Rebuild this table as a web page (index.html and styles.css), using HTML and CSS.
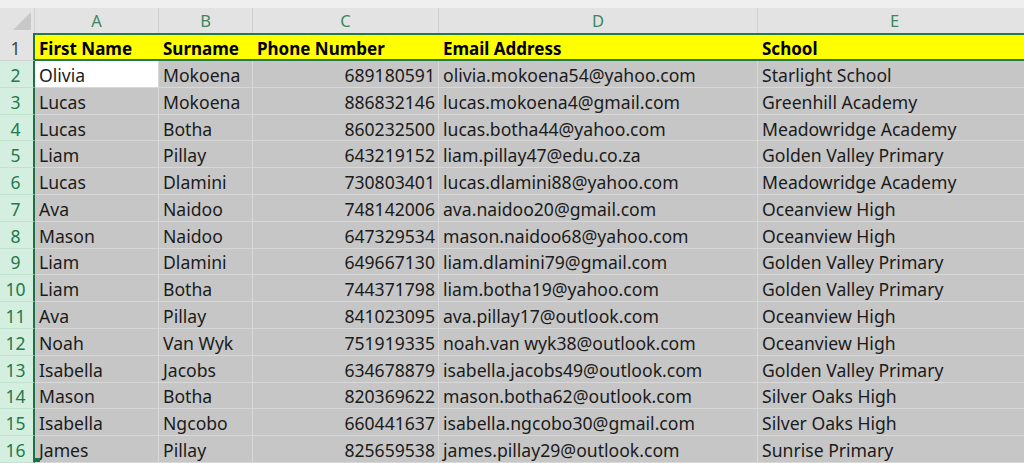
FILE: index.html
```html
<!DOCTYPE html>
<html>
<head>
<meta charset="utf-8">
<link rel="stylesheet" href="styles.css">
</head>
<body>
<div class="topstrip"></div>
<div class="sheet">
  <div class="corner"><span class="tri"></span></div>
  <div class="colhead">A</div>
  <div class="colhead">B</div>
  <div class="colhead">C</div>
  <div class="colhead">D</div>
  <div class="colhead">E</div>

  <div class="rowhead first">1</div>
  <div class="cell title">First Name</div>
  <div class="cell title">Surname</div>
  <div class="cell title">Phone Number</div>
  <div class="cell title">Email Address</div>
  <div class="cell title">School</div>

  <div class="rowhead sel">2</div><div class="cell active">Olivia</div><div class="cell">Mokoena</div><div class="cell num">689180591</div><div class="cell">olivia.mokoena54@yahoo.com</div><div class="cell">Starlight School</div>
  <div class="rowhead sel">3</div><div class="cell">Lucas</div><div class="cell">Mokoena</div><div class="cell num">886832146</div><div class="cell">lucas.mokoena4@gmail.com</div><div class="cell">Greenhill Academy</div>
  <div class="rowhead sel">4</div><div class="cell">Lucas</div><div class="cell">Botha</div><div class="cell num">860232500</div><div class="cell">lucas.botha44@yahoo.com</div><div class="cell">Meadowridge Academy</div>
  <div class="rowhead sel">5</div><div class="cell">Liam</div><div class="cell">Pillay</div><div class="cell num">643219152</div><div class="cell">liam.pillay47@edu.co.za</div><div class="cell">Golden Valley Primary</div>
  <div class="rowhead sel">6</div><div class="cell">Lucas</div><div class="cell">Dlamini</div><div class="cell num">730803401</div><div class="cell">lucas.dlamini88@yahoo.com</div><div class="cell">Meadowridge Academy</div>
  <div class="rowhead sel">7</div><div class="cell">Ava</div><div class="cell">Naidoo</div><div class="cell num">748142006</div><div class="cell">ava.naidoo20@gmail.com</div><div class="cell">Oceanview High</div>
  <div class="rowhead sel">8</div><div class="cell">Mason</div><div class="cell">Naidoo</div><div class="cell num">647329534</div><div class="cell">mason.naidoo68@yahoo.com</div><div class="cell">Oceanview High</div>
  <div class="rowhead sel">9</div><div class="cell">Liam</div><div class="cell">Dlamini</div><div class="cell num">649667130</div><div class="cell">liam.dlamini79@gmail.com</div><div class="cell">Golden Valley Primary</div>
  <div class="rowhead sel">10</div><div class="cell">Liam</div><div class="cell">Botha</div><div class="cell num">744371798</div><div class="cell">liam.botha19@yahoo.com</div><div class="cell">Golden Valley Primary</div>
  <div class="rowhead sel">11</div><div class="cell">Ava</div><div class="cell">Pillay</div><div class="cell num">841023095</div><div class="cell">ava.pillay17@outlook.com</div><div class="cell">Oceanview High</div>
  <div class="rowhead sel">12</div><div class="cell">Noah</div><div class="cell">Van Wyk</div><div class="cell num">751919335</div><div class="cell">noah.van wyk38@outlook.com</div><div class="cell">Oceanview High</div>
  <div class="rowhead sel">13</div><div class="cell">Isabella</div><div class="cell">Jacobs</div><div class="cell num">634678879</div><div class="cell">isabella.jacobs49@outlook.com</div><div class="cell">Golden Valley Primary</div>
  <div class="rowhead sel">14</div><div class="cell">Mason</div><div class="cell">Botha</div><div class="cell num">820369622</div><div class="cell">mason.botha62@outlook.com</div><div class="cell">Silver Oaks High</div>
  <div class="rowhead sel">15</div><div class="cell">Isabella</div><div class="cell">Ngcobo</div><div class="cell num">660441637</div><div class="cell">isabella.ngcobo30@gmail.com</div><div class="cell">Silver Oaks High</div>
  <div class="rowhead sel last">16</div><div class="cell">James</div><div class="cell">Pillay</div><div class="cell num">825659538</div><div class="cell">james.pillay29@outlook.com</div><div class="cell">Sunrise Primary</div>
</div>
</body>
</html>
```

FILE: styles.css
```css
html, body {
  margin: 0;
  padding: 0;
  width: 1024px;
  height: 463px;
  overflow: hidden;
  background: #ffffff;
  font-family: "Noto Sans", "Open Sans", "Liberation Sans", sans-serif;
}

.topstrip {
  height: 8px;
  background: #efefef;
}

.sheet {
  display: grid;
  grid-template-columns: 35px 124px 94px 186px 319px 274px;
  grid-template-rows: 25px 28px repeat(15, 26.8px);
  width: 1032px;
}

.corner {
  position: relative;
  background: #e3e3e3;
  border-right: 1px solid #d0d0d0;
  box-sizing: border-box;
}

.tri {
  position: absolute;
  right: 3px;
  bottom: 3px;
  width: 0;
  height: 0;
  border-left: 18px solid transparent;
  border-bottom: 18px solid #c8c8c8;
}

.colhead {
  background: #e3e3e3;
  border-right: 1px solid #d0d0d0;
  box-sizing: border-box;
  color: #3f8560;
  font-size: 16.5px;
  text-align: center;
  line-height: 26px;
}

.rowhead {
  box-sizing: border-box;
  border-right: 2px solid #1e7145;
  border-bottom: 1px solid #bfe3ce;
  background: #d4efdf;
  color: #22794b;
  font-size: 17.5px;
  text-align: center;
  padding-right: 2px;
  padding-top: 2px;
  display: flex;
  align-items: center;
  justify-content: center;
}

.rowhead.first {
  background: #e3e3e3;
  color: #444444;
  border-bottom: 1px solid #d0d0d0;
}

.rowhead.last {
  position: relative;
}

.rowhead.last::after {
  content: "";
  position: absolute;
  right: -7px;
  bottom: 0;
  width: 6px;
  height: 4px;
  background: #1e7145;
}

.cell {
  box-sizing: border-box;
  background: #c6c6c6;
  border-right: 1px solid #d8d8d8;
  border-bottom: 1px solid #d8d8d8;
  color: #1b1b1b;
  font-size: 17.6px;
  padding: 2px 3px 0 4px;
  display: flex;
  align-items: center;
  white-space: nowrap;
  overflow: hidden;
}

.cell.num {
  justify-content: flex-end;
}

.cell.title {
  background: #ffff00;
  border-top: 2px solid #257a4b;
  border-bottom: 2px solid #257a4b;
  border-right: none;
  color: #000000;
  font-weight: 700;
  font-size: 17px;
}

.cell.active {
  background: #ffffff;
}
```
